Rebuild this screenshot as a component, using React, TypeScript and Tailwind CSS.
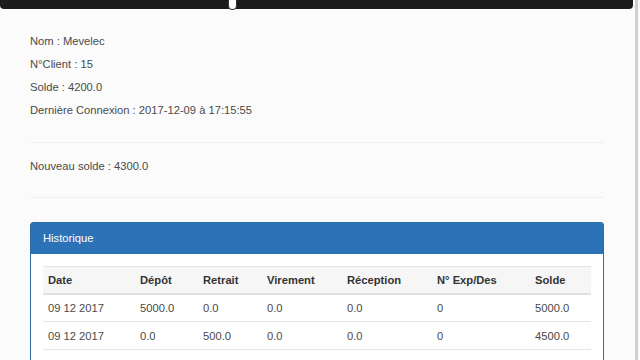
const rows = [
  ["09 12 2017", "5000.0", "0.0", "0.0", "0.0", "0", "5000.0"],
  ["09 12 2017", "0.0", "500.0", "0.0", "0.0", "0", "4500.0"],
  ["09 12 2017", "0.0", "0.0", "200.0", "0.0", "14", "4300.0"],
];

const heads = ["Date", "Dépôt", "Retrait", "Virement", "Réception", "N° Exp/Des", "Solde"];

export default function App() {
  return (
    <div className="flex h-[360px] w-[640px] overflow-hidden bg-[#fafbfa] font-['Liberation_Sans',Arial,sans-serif] text-[11.2px] text-[#4a4a4a]">
      <div className="relative flex-1">
        {/* top bar with cursor */}
        <div className="h-[9px] rounded-b-[4px] bg-[#1c1c1c]" />
        <div className="absolute left-[228px] top-0 h-[10px] w-[9px] rounded-b-full border border-t-0 border-[#333] bg-white" />

        <div className="ml-[30px] w-[574px]">
          <div className="mt-[25px] flex flex-col gap-[8px] leading-[15px]">
            <p>Nom : Mevelec</p>
            <p>N°Client : 15</p>
            <p>Solde : 4200.0</p>
            <p>Dernière Connexion : 2017-12-09 à 17:15:55</p>
          </div>
          <hr className="mt-[24px] border-t border-[#efefef]" />
          <p className="mt-[16px] leading-[15px]">Nouveau solde : 4300.0</p>
          <hr className="mt-[23px] border-t border-[#efefef]" />

          <div className="mt-[24px] rounded-[3px] border border-[#2e6da4] bg-white">
            <div className="flex h-[31px] items-center bg-[#2c72b7] px-[12px] text-white">Historique</div>
            <div className="p-[12px]">
              <table className="w-[548px] table-fixed border-collapse">
                <colgroup>
                  <col className="w-[92px]" />
                  <col className="w-[63px]" />
                  <col className="w-[64px]" />
                  <col className="w-[80px]" />
                  <col className="w-[90px]" />
                  <col className="w-[98px]" />
                  <col className="w-[61px]" />
                </colgroup>
                <thead>
                  <tr className="h-[27px] border-t border-b-2 border-t-[#e3e3e3] border-b-[#e0e0e0] bg-[#f6f6f6]">
                    {heads.map((h) => (
                      <th key={h} className="px-[5px] pt-[1px] text-left font-bold text-[#333]">{h}</th>
                    ))}
                  </tr>
                </thead>
                <tbody>
                  {rows.map((r, i) => (
                    <tr key={i} className="h-[28px] border-b border-[#e6e6e6]">
                      {r.map((c, j) => (
                        <td key={j} className="px-[5px] pt-[1px]">{c}</td>
                      ))}
                    </tr>
                  ))}
                </tbody>
              </table>
            </div>
          </div>
        </div>
      </div>
      <div className="flex w-[7px] justify-center">
        <div className="w-[3px] bg-[#cfcfcf]" />
      </div>
    </div>
  );
}
